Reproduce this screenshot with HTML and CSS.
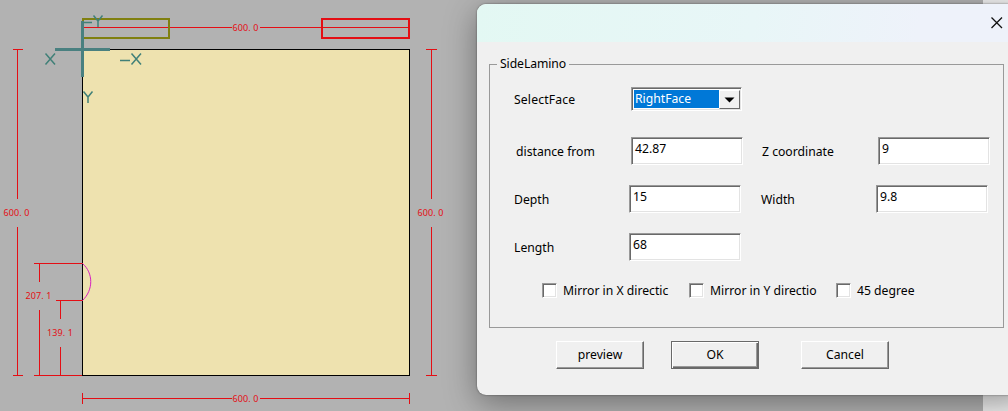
FILE: index.html
```html
<!DOCTYPE html>
<html lang="en">
<head>
<meta charset="utf-8">
<title>SideLamino</title>
<link rel="stylesheet" href="styles.css">
</head>
<body>
<main class="workspace">
  <svg class="drawing" width="983" height="411" viewBox="0 0 983 411">
    <rect class="panel" x="82.5" y="49.5" width="327" height="326"/>
    <path class="dim" d="M82 27h150v1h-150zM260 27h149v1h-149zM82 393h1v11h-1zM409 393h1v11h-1zM82 398h150v1h-150zM260 398h149v1h-149z"/>
    <path class="dim" d="M13 49h10v1h-10zM17 49h1v150h-1zM17 227h1v148h-1zM13 375h10v1h-10zM426 49h11v1h-11zM431 49h1v150h-1zM431 227h1v148h-1zM426 375h11v1h-11z"/>
    <path class="dim" d="M34 263h49v1h-49zM39 263h1v19h-1zM39 310h1v65h-1zM56 300h27v1h-27zM60 300h1v19h-1zM60 347h1v28h-1zM34 375h48v1h-48z"/>
    <rect class="edge-left" x="83" y="19" width="86" height="19"/>
    <rect class="edge-right" x="322" y="19" width="87" height="19"/>
    <path class="slot" d="M82.500 263.500C93.500 273 93.500 290 82.500 300.500"/>
    <path class="axis" d="M55 49.500H110M82.500 21V77"/>
    <path class="axis-mark" d="M45.500 53.500L55 64.500M55 53.500L45.500 64.500M120 60.500H130M131.500 53.500L141 64.500M141 53.500L131.500 64.500M83.500 91.500L88 97L92.500 91.500M88 97V103M83 22.500H92M93.500 15.500L98 21L102.500 15.500M98 21V27"/>
    <g class="dim-text">
      <text x="232.500" y="31" textLength="26">600. 0</text>
      <text x="232.500" y="401.500" textLength="26">600. 0</text>
      <text x="3.500" y="216" textLength="26">600. 0</text>
      <text x="417.500" y="216" textLength="26">600. 0</text>
      <text x="25.500" y="299" textLength="26">207. 1</text>
      <text x="47" y="336" textLength="26">139. 1</text>
    </g>
  </svg>
  <section class="dialog">
    <header class="titlebar">
      <svg class="close" width="14" height="14" viewBox="0 0 14 14"><path d="M1.500 1.500L12 12M12 1.500L1.500 12"/></svg>
    </header>
    <fieldset class="group">
      <legend>SideLamino</legend>
      <div class="row row-select">
        <span>SelectFace</span>
        <div class="combo"><span class="combo-value">RightFace</span><span class="combo-button"><svg width="11" height="6" viewBox="0 0 11 6"><path d="M0.500 0.500H10.500L5.500 5.500Z"/></svg></span></div>
      </div>
      <div class="row row-shift">
        <span>distance from</span><div class="field">42.87</div>
        <span class="label-z">Z coordinate</span><div class="field">9</div>
      </div>
      <div class="row">
        <span>Depth</span><div class="field">15</div>
        <span>Width</span><div class="field">9.8</div>
      </div>
      <div class="row">
        <span>Length</span><div class="field">68</div>
      </div>
      <div class="checks">
        <div class="check"><i class="box"></i><span class="check-label">Mirror in X directic</span></div>
        <div class="check"><i class="box"></i><span class="check-label">Mirror in Y directio</span></div>
        <div class="check"><i class="box"></i><span class="check-label">45 degree</span></div>
      </div>
    </fieldset>
    <footer class="actions">
      <div class="button">preview</div>
      <div class="button default">OK</div>
      <div class="button cancel">Cancel</div>
    </footer>
  </section>
</main>
</body>
</html>
```
FILE: styles.css
```css
* { box-sizing: border-box; }
body { margin: 0; overflow: hidden; font: 12.2px/16px "Noto Sans", sans-serif; color: #000; }
.workspace { position: relative; width: 1008px; height: 411px; overflow: hidden; background: linear-gradient(90deg, #b2b2b2 983px, #f0f0f0 983px); }
.drawing { display: block; }
.panel { fill: #eee2af; stroke: #000; shape-rendering: crispEdges; }
.dim { fill: #e40e14; }
.edge-left { fill: none; stroke: #808010; stroke-width: 2; }
.edge-right { fill: none; stroke: #e40e14; stroke-width: 2; }
.slot { fill: none; stroke: #d61fc0; }
.axis { stroke: #498080; stroke-width: 3; }
.axis-mark { fill: none; stroke: #408078; stroke-width: 1.5; }
.dim-text { font: 9px "Noto Sans", sans-serif; fill: #e40e14; }

.dialog { position: absolute; left: 477px; top: 4px; width: 551px; height: 391px; background: #f0f0f0; border-radius: 9px; box-shadow: 0 0 2px rgba(0,0,0,.5), 0 8px 32px rgba(0,0,0,.38); }
.titlebar { height: 38px; display: flex; justify-content: flex-end; padding: 12px 24px 0 0; border-radius: 9px 9px 0 0; background: linear-gradient(100deg, #e3f8f3 0, #e8f6f7 50%, #eef2fa 80%); }
.close path { stroke: #111; stroke-width: 1.3; }
.group { margin: 14px 0 0 12px; width: 515px; height: 272px; padding: 0 0 0 24px; border: 1px solid #999; }
.group legend { margin-left: -17px; padding: 0 3px; height: 16px; letter-spacing: -.08px; }
.row { display: grid; grid-template-columns: 115px 132px 115px 112px; height: 48px; align-items: start; }
.row > span { padding-top: 7px; white-space: nowrap; }
.row-select { grid-template-columns: 117px 111px; height: 65px; padding-top: 15px; }
.row-select > span { padding-top: 5px; letter-spacing: .15px; }
.row-shift { padding-left: 2px; }
.row .label-z { margin-left: -1px; }
.field { width: 112px; height: 28px; padding: 3px 3px; background: #fff; border: 1px solid; border-color: #999 #fff #fff #999; box-shadow: inset 1px 1px #696969, inset -1px -1px #e3e3e3; }
.combo { display: flex; width: 111px; height: 24px; padding: 1px 1px 1px 2px; background: #fff; border: 1px solid; border-color: #999 #fff #fff #999; box-shadow: inset 1px 1px #696969, inset -1px -1px #e3e3e3; }
.combo-value { width: 85px; height: 18px; margin-top: 1px; padding: 1px; background: #0078d7; color: #fff; }
.combo-button { display: flex; flex: 1; align-items: center; justify-content: center; margin-top: 1px; background: #f0f0f0; border: 1px solid; border-color: #fff #696969 #696969 #fff; }
.checks { display: grid; grid-template-columns: repeat(3, 147px); padding: 2px 0 0 28px; }
.check { display: flex; gap: 6px; }
.box { width: 15px; height: 15px; background: #fff; border: 1px solid; border-color: #999 #fff #fff #999; box-shadow: inset 1px 1px #696969, inset -1px -1px #e3e3e3; }
.check-label { white-space: nowrap; }
.actions { display: flex; padding: 13px 0 0 79px; gap: 27px; }
.button { width: 88px; height: 28px; line-height: 25px; text-align: center; background: #f0f0f0; border: 1px solid; border-color: #fff #696969 #696969 #fff; box-shadow: inset -1px -1px #999; }
.default { border-color: #696969; box-shadow: inset 1px 1px #fff, inset -1px -1px #696969, inset -2px -2px #999; }
.cancel { margin-left: 15px; }
```
